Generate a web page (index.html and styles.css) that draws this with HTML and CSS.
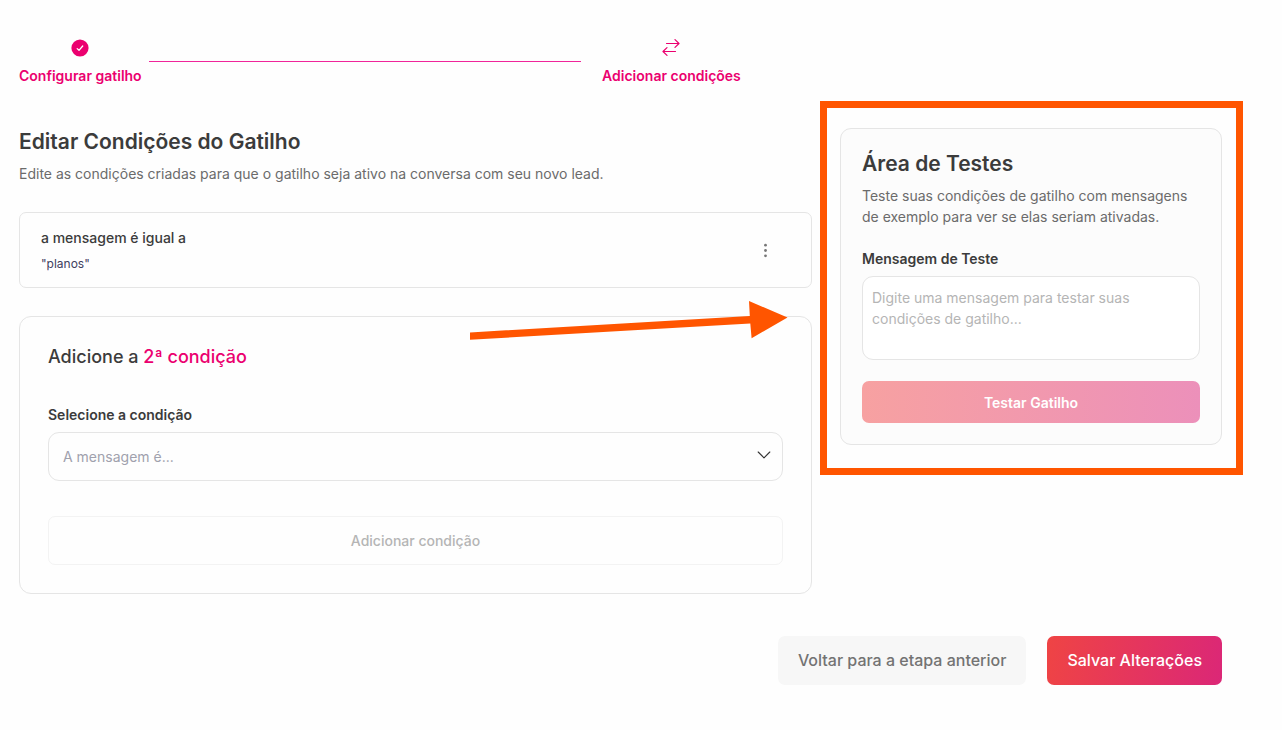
FILE: index.html
```html
<!DOCTYPE html>
<html lang="pt-BR">
<head>
<meta charset="utf-8">
<meta name="viewport" content="width=device-width, initial-scale=1">
<title>Editar Condições do Gatilho</title>
<link rel="stylesheet" href="styles.css">
</head>
<body>
<div class="page">
  <ol class="steps">
    <li class="step">
      <svg class="step-icon" viewBox="0 0 18 18" aria-hidden="true"><circle cx="9" cy="9" r="8.6" fill="currentColor"/><path d="M6.2 9.6 8 11.3 11.7 7" fill="none" stroke="#fff" stroke-width="1.3" stroke-linecap="round" stroke-linejoin="round"/></svg>
      <span>Configurar gatilho</span>
    </li>
    <li class="step-line" aria-hidden="true"></li>
    <li class="step">
      <svg class="step-icon" viewBox="0 0 18 18" fill="none" stroke="currentColor" stroke-width="1.2" stroke-linecap="round" stroke-linejoin="round" aria-hidden="true"><path d="M4.5 4.5H17M13 .6 17 4.5 13 8.4M13.5 12.5H1M5 8.6 1 12.5 5 16.4"/></svg>
      <span>Adicionar condições</span>
    </li>
  </ol>

  <div class="columns">
    <main class="editor">
      <header class="intro">
        <h1 class="title">Editar Condições do Gatilho</h1>
        <p class="text">Edite as condições criadas para que o gatilho seja ativo na conversa com seu novo lead.</p>
      </header>
      <section class="condition">
        <div class="condition-body">
          <p class="condition-name">a mensagem é igual a</p>
          <p class="condition-value">"planos"</p>
        </div>
        <button class="menu" type="button" aria-label="Opções">
          <svg width="5" height="15" viewBox="0 0 5 15" fill="#777" aria-hidden="true"><circle cx="2.5" cy="2.2" r="1.4"/><circle cx="2.5" cy="7.5" r="1.4"/><circle cx="2.5" cy="12.8" r="1.4"/></svg>
        </button>
      </section>
      <form class="add">
        <h2 class="subtitle">Adicione a <span class="accent">2ª condição</span></h2>
        <label class="label" for="condicao">Selecione a condição</label>
        <div class="select-wrap">
          <select class="select" id="condicao"><option>A mensagem é...</option></select>
          <svg class="chevron" width="14" height="8" viewBox="0 0 14 8" fill="none" stroke="#333" stroke-width="1.1" stroke-linecap="round" stroke-linejoin="round" aria-hidden="true"><path d="M1.2 1 7 6.8 12.8 1"/></svg>
        </div>
        <button class="btn-outline" type="button" disabled>Adicionar condição</button>
      </form>
      <svg class="arrow" width="318" height="38" viewBox="0 0 318 38" fill="#ff5500" aria-hidden="true"><path d="M0 31.4 279.8 15.1 279 0 317.5 16.4 281.6 37.3 280.3 22.5 0 38.8Z"/></svg>
    </main>

    <aside class="tests">
      <h2 class="title">Área de Testes</h2>
      <p class="text">Teste suas condições de gatilho com mensagens de exemplo para ver se elas seriam ativadas.</p>
      <label class="label tests-label" for="mensagem">Mensagem de Teste</label>
      <textarea class="textarea" id="mensagem" placeholder="Digite uma mensagem para testar suas condições de gatilho..."></textarea>
      <button class="btn-test" type="button" disabled>Testar Gatilho</button>
      <div class="frame" aria-hidden="true"></div>
    </aside>
  </div>

  <footer class="actions">
    <button class="btn btn-back" type="button">Voltar para a etapa anterior</button>
    <button class="btn btn-save" type="button">Salvar Alterações</button>
  </footer>
</div>
</body>
</html>
```
FILE: styles.css
```css
* { box-sizing: border-box; }
body { margin: 0; background: #fefefe; color: #3b3b3b; font: 14px/21px Inter, sans-serif; }
h1, h2, p, ol { margin: 0; padding: 0; }
button, select, textarea { font: inherit; color: inherit; }

.page { padding: 39px 60px 44px 19px; }

.steps { display: flex; width: 60%; list-style: none; color: #eb006f; }
.step { display: flex; flex-direction: column; align-items: center; gap: 8px; font-weight: 600; white-space: nowrap; }
.step-icon { width: 18px; height: 18px; }
.step-line { flex: 1; height: 1px; margin: 22px 21px 0 7px; background: #f0249a; }

.columns { display: grid; grid-template-columns: minmax(0, 1fr) 382px; gap: 28px; align-items: start; margin-top: 42px; }
.editor { position: relative; display: flex; flex-direction: column; }
.title { font-size: 21px; line-height: 28px; font-weight: 600; }
.text { margin-top: 7px; color: #6b6b6b; }

.condition { display: flex; align-items: center; justify-content: space-between; margin-top: 28px; padding: 14px 35px 13px 21px; border: 1px solid #e5e5e5; border-radius: 7px; }
.condition-name { font-weight: 500; }
.condition-value { margin-top: 5px; font-size: 12px; color: #40405e; }
.menu { display: flex; justify-content: center; width: 21px; padding: 3px; border: 0; background: none; }

.add { display: flex; flex-direction: column; margin-top: 28px; padding: 28px; border: 1px solid #e5e5e5; border-radius: 12px; }
.subtitle { font-size: 18px; line-height: 24px; font-weight: 500; }
.accent { color: #eb006f; }
.label { display: block; font-weight: 600; }
.add .label { margin-top: 35px; }
.select-wrap { position: relative; margin-top: 7px; }
.select { appearance: none; display: block; width: 100%; height: 49px; padding: 0 14px; border: 1px solid #e5e5e5; border-radius: 11px; background: #fefefe; color: #a0a1ad; }
.chevron { position: absolute; top: 19px; right: 12px; pointer-events: none; }
.btn-outline { height: 49px; margin-top: 35px; border: 1px solid #f3f3f3; border-radius: 7px; background: none; color: #b5b5b5; font-weight: 500; }
.arrow { position: absolute; top: 173px; right: 24px; overflow: visible; }

.tests { position: relative; display: flex; flex-direction: column; padding: 21px; border: 1px solid #e5e5e5; border-radius: 11px; background: #fcfcfc; }
.tests-label { margin-top: 21px; }
.textarea { height: 84px; margin-top: 7px; padding: 10px 9px; border: 1px solid #e5e5e5; border-radius: 11px; background: #fff; resize: none; }
.textarea::placeholder { color: #b5b5b5; }
.btn-test { height: 42px; margin-top: 21px; border: 0; border-radius: 7px; background: linear-gradient(90deg, #f7a1a1, #ec90ba); color: #fff; font-weight: 600; }
.frame { position: absolute; inset: -28px -22px -31px -21px; border: 7px solid #ff5500; pointer-events: none; }

.actions { display: flex; justify-content: flex-end; gap: 21px; margin-top: 42px; }
.btn { height: 49px; padding: 0 20px; border: 0; border-radius: 7px; font-size: 16px; font-weight: 500; }
.btn-back { background: #f7f7f7; color: #737373; }
.btn-save { background: linear-gradient(100deg, #ef4444, #db2777); color: #fff; }
```
